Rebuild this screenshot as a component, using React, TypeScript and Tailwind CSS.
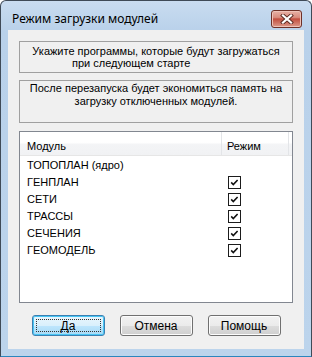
import React from "react";

const modules = [
    { name: "ТОПОПЛАН (ядро)", checked: null },
    { name: "ГЕНПЛАН", checked: true },
    { name: "СЕТИ", checked: true },
    { name: "ТРАССЫ", checked: true },
    { name: "СЕЧЕНИЯ", checked: true },
    { name: "ГЕОМОДЕЛЬ", checked: true },
];

function CheckBox() {
    return (
        <svg width="13" height="13" viewBox="0 0 13 13" className="block">
            <rect x="0.5" y="0.5" width="12" height="12" fill="#fff" stroke="#1c1c1c" />
            <path d="M3.2 6.4 L5.3 8.5 L9.6 4" fill="none" stroke="#111" strokeWidth="1.6" />
        </svg>
    );
}

function Button({ label, primary }: { label: string; primary?: boolean }) {
    if (primary) {
        return (
            <button className="relative w-[73px] h-[21px] rounded-[3px] border border-[#3c7fb1] bg-[linear-gradient(to_bottom,#eaf6fd_0%,#d9f0fc_50%,#bee6fd_51%,#a7d9f5_100%)] shadow-[inset_0_0_0_1px_#48c6f4] text-[12px] text-black">
                <span className="absolute inset-[3px] border border-dotted border-[#333]" />
                <span className="relative">{label}</span>
            </button>
        );
    }
    return (
        <button className="w-[73px] h-[21px] rounded-[3px] border border-[#707070] bg-[linear-gradient(to_bottom,#f2f2f2_0%,#ebebeb_50%,#dddddd_51%,#cfcfcf_100%)] shadow-[inset_0_0_0_1px_#fcfcfc] text-[12px] text-black">
            {label}
        </button>
    );
}

export default function App() {
    return (
        <div className="w-[312px] h-[357px] flex flex-col border border-[#3f4a57] border-b-[#2c86bd] rounded-t-[6px] bg-[linear-gradient(to_bottom,#c9dcf0_0px,#b9d1ea_30px,#bcd4ec_100%)] overflow-hidden font-['Liberation_Sans',Arial,sans-serif]">
            {/* Title bar */}
            <div className="h-[29px] flex justify-between items-start shrink-0">
                <span className="pl-[11px] pt-[10px] text-[12px] leading-[16px] text-black font-['Noto_Sans',sans-serif]">
                    Режим загрузки модулей
                </span>
                <div className="mt-[9px] mr-[9px] w-[31px] h-[18px] rounded-[3px] border border-[#6e3027] bg-[linear-gradient(to_bottom,#e8b1a6_0%,#d98c7e_40%,#c24e3f_50%,#c75e4e_60%,#dc9a8b_100%)] shadow-[inset_0_0_0_1px_#eec2b8] flex items-center justify-center">
                    <svg width="14" height="10" viewBox="0 0 14 10">
                        <path d="M3 1.5 L11 8.5 M11 1.5 L3 8.5" stroke="#5a2a22" strokeWidth="4" strokeLinecap="square" />
                        <path d="M3 1.5 L11 8.5 M11 1.5 L3 8.5" stroke="#ffffff" strokeWidth="2.2" strokeLinecap="square" />
                    </svg>
                </div>
            </div>

            {/* Client area */}
            <div className="mx-[7px] h-[319px] shrink-0 bg-[#f0f0f0] px-[11px] pt-[11px] flex flex-col text-[11px] text-black">
                <div className="h-[32px] border border-[#a0a0a0] pt-[3px] leading-[12px]">
                    <div className="text-center">Укажите программы, которые будут загружаться</div>
                    <div className="pl-[52px]">при следующем старте</div>
                </div>

                <div className="mt-[7px] h-[43px] border border-[#a0a0a0] pt-[1px] leading-[13px] text-center">
                    <div>После перезапуска будет экономиться память на</div>
                    <div>загрузку отключенных модулей.</div>
                </div>

                <div className="mt-[8px] h-[172px] border border-[#828790] bg-white">
                    <div className="h-[24px] flex bg-[linear-gradient(to_bottom,#ffffff_0%,#ffffff_45%,#f3f4f6_55%,#f1f2f4_100%)] border-b border-[#e6e6e6]">
                        <div className="w-[202px] pl-[7px] pt-[6px] border-r border-[#e3e5e8]">Модуль</div>
                        <div className="w-[67px] pl-[5px] pt-[6px] border-r border-[#e3e5e8]">Режим</div>
                        <div className="flex-1" />
                    </div>
                    <div className="pt-[1px]">
                        {modules.map((m) => (
                            <div key={m.name} className="h-[17px] flex items-center">
                                <div className="w-[203px] pl-[7px]">{m.name}</div>
                                <div className="pl-[5px]">{m.checked && <CheckBox />}</div>
                            </div>
                        ))}
                    </div>
                </div>

                <div className="mt-[12px] flex justify-center gap-[15px]">
                    <Button label="Да" primary />
                    <Button label="Отмена" />
                    <Button label="Помощь" />
                </div>
            </div>
        </div>
    );
}
